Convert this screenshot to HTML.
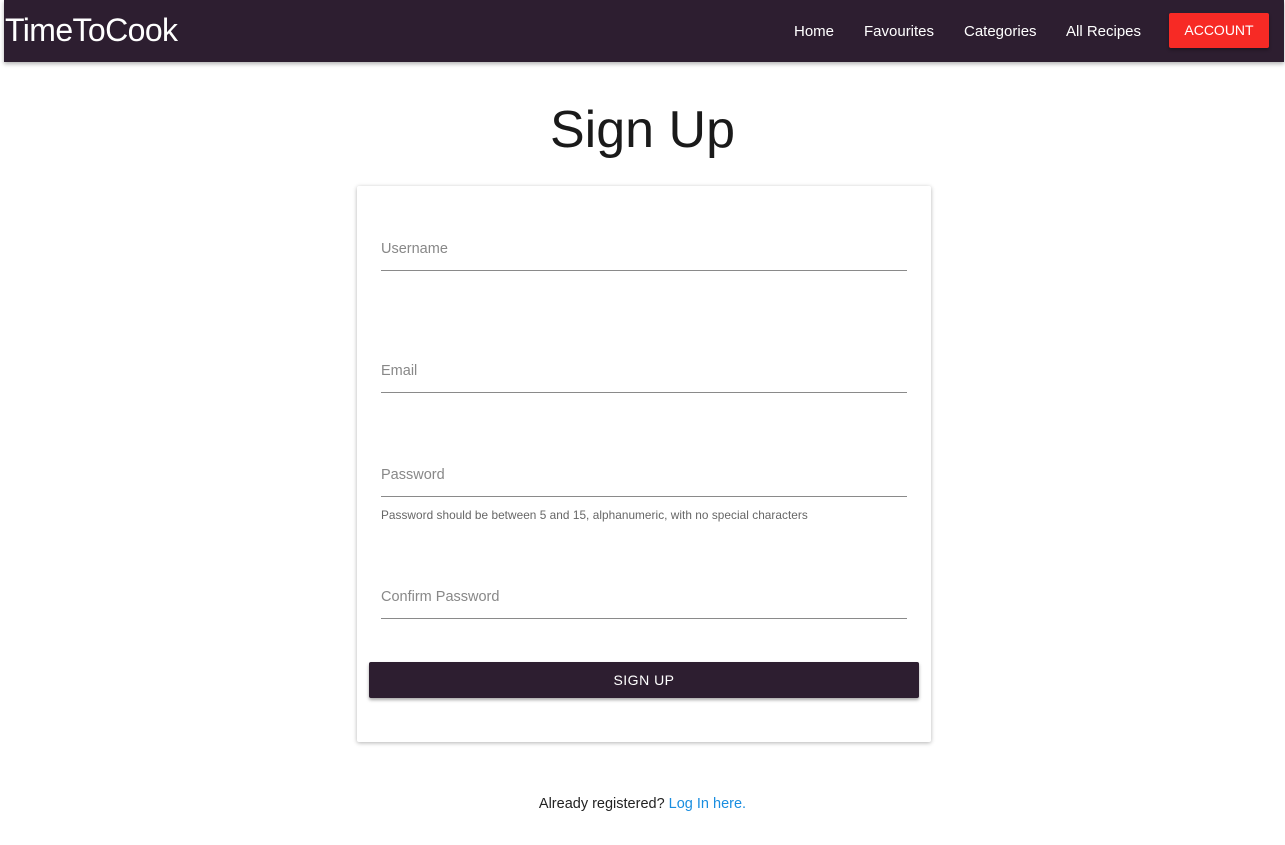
<!DOCTYPE html>
<html><head><style>
body{margin:0;background:#fff;font-family:"Liberation Sans",sans-serif;width:1285px;height:845px;position:relative;overflow:hidden}
.nav{position:absolute;left:4px;top:0;width:1280px;height:62px;background:#2d1e30;box-shadow:0 2px 4px rgba(0,0,0,.3)}
.logo{position:absolute;left:1px;top:12px;color:#fff;font-size:32px;letter-spacing:-0.6px}
.nav a{position:absolute;top:22px;color:#fff;font-size:15px}
.acc{position:absolute;left:1165px;top:13px;width:100px;height:35px;background:#f72a25;color:#fff;font-size:14px;text-align:center;line-height:34px;border-radius:2px;box-shadow:0 2px 3px rgba(0,0,0,.3)}
h1{position:absolute;left:0;width:1285px;top:100px;margin:0;text-align:center;font-weight:normal;font-size:52px;color:#1a1a1a}
.card{position:absolute;left:357px;top:186px;width:574px;height:556px;background:#fff;box-shadow:0 1px 4px rgba(0,0,0,.3);border-radius:2px}
.f{position:absolute;left:24px;width:526px;border-bottom:1px solid #8a8a8a;color:#888;font-size:14.5px;padding-bottom:13px;padding-top:1px}
.hint{position:absolute;left:24px;top:322px;font-size:11.8px;color:#666;letter-spacing:.05px}
.btn{position:absolute;left:12px;top:476px;width:550px;height:36px;background:#2d1e30;color:#fff;text-align:center;line-height:36px;font-size:14px;letter-spacing:.5px;border-radius:2px;box-shadow:0 2px 3px rgba(0,0,0,.35)}
.foot{position:absolute;top:796px;left:0;width:1285px;text-align:center;font-size:14.5px;color:#222}
.foot span{color:#1a8ee0}
</style></head><body>
<div class="nav"><div class="logo">TimeToCook</div>
<a style="left:790px;top:23px">Home</a><a style="left:860px;top:23px">Favourites</a><a style="left:960px;top:23px">Categories</a><a style="left:1062px;top:23px">All Recipes</a>
<div class="acc">ACCOUNT</div></div>
<h1>Sign Up</h1>
<div class="card">
<div class="f" style="top:54px">Username</div>
<div class="f" style="top:176px">Email</div>
<div class="f" style="top:280px">Password</div>
<div class="hint">Password should be between 5 and 15, alphanumeric, with no special characters</div>
<div class="f" style="top:402px">Confirm Password</div>
<div class="btn">SIGN UP</div>
</div>
<div class="foot">Already registered? <span>Log In here.</span></div>
</body></html>
